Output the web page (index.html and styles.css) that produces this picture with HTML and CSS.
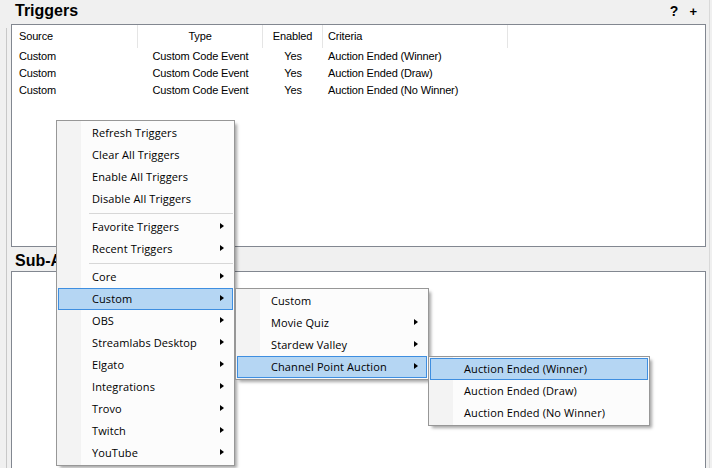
FILE: index.html
```html
<!DOCTYPE html>
<html>
<head>
<meta charset="utf-8">
<title>Triggers</title>
<link rel="stylesheet" href="styles.css">
</head>
<body>
<div class="app">
  <div class="edge-left"></div>
  <div class="main">
    <section class="panel">
      <div class="panel-head">
        <h2 class="panel-title">Triggers</h2>
        <div class="panel-tools"><span class="tool tool-help">?</span><span class="tool tool-add">+</span></div>
      </div>
      <div class="listview triggers-list">
        <div class="lv-row lv-header">
          <div class="cell c-source">Source</div>
          <div class="cell c-type">Type</div>
          <div class="cell c-enabled">Enabled</div>
          <div class="cell c-criteria">Criteria</div>
          <div class="cell c-fill"></div>
        </div>
        <div class="lv-row">
          <div class="cell c-source">Custom</div>
          <div class="cell c-type">Custom Code Event</div>
          <div class="cell c-enabled">Yes</div>
          <div class="cell c-criteria">Auction Ended (Winner)</div>
          <div class="cell c-fill"></div>
        </div>
        <div class="lv-row">
          <div class="cell c-source">Custom</div>
          <div class="cell c-type">Custom Code Event</div>
          <div class="cell c-enabled">Yes</div>
          <div class="cell c-criteria">Auction Ended (Draw)</div>
          <div class="cell c-fill"></div>
        </div>
        <div class="lv-row">
          <div class="cell c-source">Custom</div>
          <div class="cell c-type">Custom Code Event</div>
          <div class="cell c-enabled">Yes</div>
          <div class="cell c-criteria">Auction Ended (No Winner)</div>
          <div class="cell c-fill"></div>
        </div>
      </div>
    </section>
    <section class="panel">
      <div class="panel-head sub-head">
        <h2 class="panel-title">Sub-Actions</h2>
      </div>
      <div class="listview sub-list"></div>
    </section>
  </div>
  <div class="edge-right"></div>

  <div class="menu menu-main">
    <div class="menu-item">Refresh Triggers</div>
    <div class="menu-item">Clear All Triggers</div>
    <div class="menu-item">Enable All Triggers</div>
    <div class="menu-item">Disable All Triggers</div>
    <div class="menu-sep"></div>
    <div class="menu-item has-sub">Favorite Triggers</div>
    <div class="menu-item has-sub">Recent Triggers</div>
    <div class="menu-sep"></div>
    <div class="menu-item has-sub">Core</div>
    <div class="menu-item has-sub is-active">Custom</div>
    <div class="menu-item has-sub">OBS</div>
    <div class="menu-item has-sub">Streamlabs Desktop</div>
    <div class="menu-item has-sub">Elgato</div>
    <div class="menu-item has-sub">Integrations</div>
    <div class="menu-item has-sub">Trovo</div>
    <div class="menu-item has-sub">Twitch</div>
    <div class="menu-item has-sub">YouTube</div>
  </div>

  <div class="menu menu-custom">
    <div class="menu-item">Custom</div>
    <div class="menu-item has-sub">Movie Quiz</div>
    <div class="menu-item has-sub">Stardew Valley</div>
    <div class="menu-item has-sub is-active">Channel Point Auction</div>
  </div>

  <div class="menu menu-auction">
    <div class="menu-item is-active">Auction Ended (Winner)</div>
    <div class="menu-item">Auction Ended (Draw)</div>
    <div class="menu-item">Auction Ended (No Winner)</div>
  </div>
</div>
</body>
</html>
```

FILE: styles.css
```css
* { box-sizing: border-box; }

html, body {
  margin: 0;
  padding: 0;
}

body {
  background: #f0f0f0;
  font-family: "Liberation Sans", Arial, sans-serif;
  color: #000;
}

.app {
  position: relative;
  width: 712px;
  height: 468px;
  overflow: hidden;
  display: flex;
  background: #f0f0f0;
}

.edge-left {
  flex: none;
  width: 7px;
  margin-top: 28px;
  border-right: 1px solid #c8c8c8;
}

.edge-right {
  flex: none;
  width: 3px;
  border-left: 1px solid #d9d9d9;
}

.main {
  flex: 1;
  min-width: 0;
  padding: 0 3px 0 4px;
  display: flex;
  flex-direction: column;
}

.panel {
  display: flex;
  flex-direction: column;
  flex: none;
}

.panel-head {
  height: 24px;
  padding-left: 4px;
  display: flex;
  align-items: baseline;
  justify-content: space-between;
}

.panel-title {
  margin: 0;
  padding-top: 1px;
  font: bold 16px/20px "Liberation Sans", Arial, sans-serif;
  white-space: nowrap;
}

.sub-head {
  padding-top: 3px;
}

.panel-tools {
  display: flex;
  align-items: baseline;
  gap: 11px;
  padding-right: 9px;
}

.tool {
  font-weight: bold;
  line-height: 20px;
}

.tool-help { font-size: 14px; }
.tool-add { font-size: 13px; }

.listview {
  background: #fff;
  border: 1px solid #828790;
  font-size: 11px;
  letter-spacing: -0.15px;
}

.triggers-list { height: 223px; }
.sub-list { height: 230px; }

.lv-row {
  display: grid;
  grid-template-columns: 126px 125px 60px 185px 1fr;
  height: 17px;
  line-height: 17px;
  white-space: nowrap;
}

.lv-header {
  height: 23px;
  line-height: 22px;
}

.lv-header .cell {
  border-right: 1px solid #e5e5e5;
}

.lv-header .c-fill { border-right: 0; }

.cell { overflow: hidden; }

.c-source { padding-left: 7px; }
.c-type { text-align: center; }
.c-enabled { text-align: center; }
.c-criteria { padding-left: 5px; }

/* context menus */
.menu {
  position: absolute;
  border: 1px solid #979797;
  padding: 1px 0;
  background: linear-gradient(to right, #f3f3f3 0, #f3f3f3 24px, #fcfcfc 24px);
  box-shadow: 3px 3px 3px -1px rgba(0, 0, 0, 0.35);
  font-family: "Open Sans", "Noto Sans", sans-serif;
  font-size: 11px;
  letter-spacing: 0.1px;
  color: #000;
}

.menu-main { left: 56px; top: 120px; width: 179px; z-index: 1; }
.menu-custom { left: 235px; top: 288px; width: 194px; z-index: 2; }
.menu-auction { left: 428px; top: 356px; width: 222px; z-index: 3; }

.menu-item {
  position: relative;
  height: 22px;
  line-height: 20px;
  margin: 0 1px;
  padding-left: 33px;
  border: 1px solid transparent;
  white-space: nowrap;
}

.menu-item.is-active {
  background: #b5d6f3;
  border-color: #3e8ee0;
}

.menu-item.has-sub::after {
  content: "";
  position: absolute;
  right: 8px;
  top: 6px;
  border-left: 4px solid #000;
  border-top: 3.5px solid transparent;
  border-bottom: 3.5px solid transparent;
}

.menu-sep {
  height: 1px;
  margin: 3px 1px 2px 32px;
  background: #d7d7d7;
}
```
